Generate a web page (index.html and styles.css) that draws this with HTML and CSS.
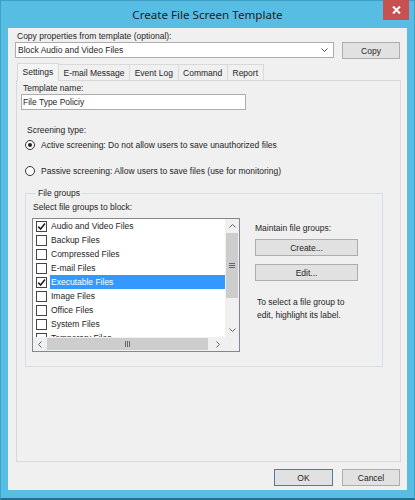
FILE: index.html
```html
<!DOCTYPE html>
<html>
<head>
<meta charset="utf-8">
<link rel="stylesheet" href="styles.css">
</head>
<body>
<div class="window">
  <div class="titlebar">
    <div class="title">Create File Screen Template</div>
    <div class="close"><svg width="9" height="8" viewBox="0 0 9 8"><path d="M1 0.5 L8 7.5 M8 0.5 L1 7.5" stroke="#fff" stroke-width="2"/></svg></div>
  </div>
  <div class="client">
    <div class="lbl top-lbl">Copy properties from template (optional):</div>
    <div class="combo-row">
      <div class="combo"><span>Block Audio and Video Files</span><svg class="chev" width="7" height="4" viewBox="0 0 7 4"><path d="M0.5 0.5 L3.5 3.5 L6.5 0.5" fill="none" stroke="#555" stroke-width="1"/></svg></div>
      <div class="btn copy">Copy</div>
    </div>
    <div class="tabs">
      <div class="tab active">Settings</div>
      <div class="tab">E-mail Message</div>
      <div class="tab">Event Log</div>
      <div class="tab">Command</div>
      <div class="tab">Report</div>
    </div>
    <div class="panel">
      <div class="lbl tn-lbl">Template name:</div>
      <div class="textbox">File Type Policiy</div>
      <div class="lbl st-lbl">Screening type:</div>
      <div class="radio r1"><span class="rb on"></span><span>Active screening: Do not allow users to save unauthorized files</span></div>
      <div class="radio r2"><span class="rb"></span><span>Passive screening: Allow users to save files (use for monitoring)</span></div>
      <fieldset class="group">
        <legend>File groups</legend>
        <div class="group-body">
          <div class="left">
            <div class="lbl sel-lbl">Select file groups to block:</div>
            <div class="listbox">
              <div class="items">
                <div class="item"><span class="cb on"><svg width="9" height="9" viewBox="0 0 9 9"><path d="M1.2 4.6 L3.6 7 L8 1.5" fill="none" stroke="#222" stroke-width="1.6"/></svg></span><span class="name">Audio and Video Files</span></div>
                <div class="item"><span class="cb"></span><span class="name">Backup Files</span></div>
                <div class="item"><span class="cb"></span><span class="name">Compressed Files</span></div>
                <div class="item"><span class="cb"></span><span class="name">E-mail Files</span></div>
                <div class="item sel"><span class="cb on"><svg width="9" height="9" viewBox="0 0 9 9"><path d="M1.2 4.6 L3.6 7 L8 1.5" fill="none" stroke="#222" stroke-width="1.6"/></svg></span><span class="name">Executable Files</span></div>
                <div class="item"><span class="cb"></span><span class="name">Image Files</span></div>
                <div class="item"><span class="cb"></span><span class="name">Office Files</span></div>
                <div class="item"><span class="cb"></span><span class="name">System Files</span></div>
                <div class="item"><span class="cb"></span><span class="name">Temporary Files</span></div>
              </div>
              <div class="vscroll">
                <div class="arrow"><svg width="7" height="4" viewBox="0 0 7 4"><path d="M0.5 3.5 L3.5 0.5 L6.5 3.5" fill="none" stroke="#606060"/></svg></div>
                <div class="vthumb"><svg width="6" height="5" viewBox="0 0 6 5"><path d="M0 0.5 H6 M0 2.5 H6 M0 4.5 H6" stroke="#666"/></svg></div>
                <div class="vtrack"></div>
                <div class="arrow"><svg width="7" height="4" viewBox="0 0 7 4"><path d="M0.5 0.5 L3.5 3.5 L6.5 0.5" fill="none" stroke="#606060"/></svg></div>
              </div>
              <div class="hscroll">
                <div class="arrow"><svg width="4" height="7" viewBox="0 0 4 7"><path d="M3.5 0.5 L0.5 3.5 L3.5 6.5" fill="none" stroke="#606060"/></svg></div>
                <div class="hthumb"><svg width="5" height="6" viewBox="0 0 5 6"><path d="M0.5 0 V6 M2.5 0 V6 M4.5 0 V6" stroke="#666"/></svg></div>
                <div class="htrack"></div>
                <div class="arrow"><svg width="4" height="7" viewBox="0 0 4 7"><path d="M0.5 0.5 L3.5 3.5 L0.5 6.5" fill="none" stroke="#606060"/></svg></div>
              </div>
              <div class="corner"></div>
            </div>
          </div>
          <div class="right">
            <div class="lbl mt-lbl">Maintain file groups:</div>
            <div class="btn wide create">Create...</div>
            <div class="btn wide edit">Edit...</div>
            <div class="hint">To select a file group to<br>edit, highlight its label.</div>
          </div>
        </div>
      </fieldset>
    </div>
    <div class="footer">
      <div class="btn ok">OK</div>
      <div class="btn cancel">Cancel</div>
    </div>
  </div>
</div>
</body>
</html>
```

FILE: styles.css
```css
* { box-sizing: border-box; }
body {
  margin: 0;
  font-family: "Liberation Sans", Arial, sans-serif;
  font-size: 8.5px;
  color: #1e1e1e;
}
.window {
  width: 415px;
  height: 500px;
  background: #58bde3;
  border: 1px solid #3f9fc6;
  border-bottom: 2px solid #2a6c88;
  padding: 0 7px 8px 7px;
  display: flex;
  flex-direction: column;
}
.titlebar {
  height: 27px;
  position: relative;
  display: flex;
  justify-content: center;
  align-items: center;
}
.title {
  font-family: "Noto Sans", sans-serif;
  font-size: 11.6px;
  color: #222;
  margin-top: -1px;
}
.close {
  position: absolute;
  top: -1px;
  right: -2px;
  width: 26px;
  height: 20px;
  background: #c75050;
  display: flex;
  align-items: center;
  justify-content: center;
}
.client {
  flex: 1;
  background: #f0f0f0;
  padding: 3px 7px 0 7px;
  display: flex;
  flex-direction: column;
}
.lbl { line-height: 11px; height: 11px; white-space: nowrap; }
.top-lbl { margin-left: 2px; }
.combo-row { display: flex; align-items: flex-start; }
.combo {
  width: 319px;
  height: 16px;
  background: #fff;
  border: 1px solid #acacac;
  display: flex;
  align-items: center;
  justify-content: space-between;
  padding: 0 5px 0 2px;
}
.btn {
  background: #e1e1e1;
  border: 1px solid #adadad;
  display: flex;
  align-items: center;
  justify-content: center;
  height: 17px;
}
.copy { width: 58px; margin-left: 8px; }
.tabs { display: flex; margin-top: 5px; margin-left: 2px; height: 16px; align-items: flex-end; position: relative; z-index: 1; }
.tab {
  height: 16px;
  padding: 0 4.6px;
  border: 1px solid #d9d9d9;
  border-bottom: none;
  margin-left: -1px;
  background: #f0f0f0;
  display: flex;
  align-items: center;
  white-space: nowrap;
}
.tab.active {
  height: 18px;
  margin-bottom: -1px;
  margin-left: 0;
  background: #f4f4f4;
  padding-bottom: 1px;
}
.panel {
  width: 385px;
  height: 382px;
  margin-left: 1px;
  border: 1px solid #d9d9d9;
  background: #f0f0f0;
  display: flex;
  flex-direction: column;
  align-items: flex-start;
}
.tn-lbl { margin: 2px 0 0 6px; }
.textbox {
  width: 225px;
  height: 16px;
  margin-left: 4px;
  background: #fff;
  border: 1px solid #acacac;
  padding-left: 1px;
  line-height: 14px;
}
.st-lbl { margin: 15px 0 0 10px; }
.radio { display: flex; align-items: center; height: 12px; margin-left: 8px; white-space: nowrap; }
.r1 { margin-top: 3px; }
.r2 { margin-top: 14px; }
.rb {
  width: 10px;
  height: 10px;
  border: 1px solid #333;
  border-radius: 50%;
  margin-right: 6px;
  background: #fff;
  display: flex;
  align-items: center;
  justify-content: center;
}
.rb.on::after {
  content: "";
  width: 4px;
  height: 4px;
  border-radius: 50%;
  background: #222;
}
.group {
  margin: 11px 0 0 8px;
  width: 358px;
  border: 1px solid #d5dfe5;
  padding: 3px 6px 14px 6px;
}
.group legend {
  padding: 0 2px;
  margin-left: 4px;
  line-height: 11px;
}
.group-body { display: flex; }
.sel-lbl { margin-left: 1px; }
.listbox {
  margin-top: 5px;
  width: 208px;
  height: 134px;
  border: 1px solid #828790;
  background: #fff;
  display: grid;
  grid-template-columns: 1fr 14px;
  grid-template-rows: 1fr 14px;
}
.items { overflow: hidden; padding-top: 0; }
.item { height: 14px; display: flex; align-items: center; padding-left: 3px; }
.cb {
  width: 11px;
  height: 11px;
  border: 1px solid #444;
  background: #fff;
  margin-right: 3px;
  display: flex;
  align-items: center;
  justify-content: center;
  flex: none;
}
.name { flex: 1; height: 14px; line-height: 14px; padding-left: 1px; }
.item.sel .name { background: #3399ff; color: #fff; }
.vscroll { display: flex; flex-direction: column; background: #f0f0f0; }
.vscroll .arrow { height: 14px; }
.arrow { display: flex; align-items: center; justify-content: center; background: #f0f0f0; }
.vthumb { height: 65px; background: #cdcdcd; margin: 0 1px; display: flex; align-items: center; justify-content: center; }
.vtrack { flex: 1; }
.hscroll { display: flex; background: #f0f0f0; }
.hscroll .arrow { width: 14px; }
.hthumb { width: 161px; background: #cdcdcd; margin: 1px 0; display: flex; align-items: center; justify-content: center; }
.htrack { flex: 1; }
.corner { background: #f0f0f0; }
.right { margin-left: 15px; display: flex; flex-direction: column; }
.mt-lbl { margin-top: 21px; }
.wide { width: 103px; }
.create { margin-top: 5px; }
.edit { margin-top: 8px; }
.hint { margin-top: 15px; line-height: 13px; margin-left: 2px; }
.footer { display: flex; justify-content: flex-end; gap: 9px; margin-top: 7px; }
.ok { width: 59px; border-color: #4a7ca8; }
.cancel { width: 58px; }
```
